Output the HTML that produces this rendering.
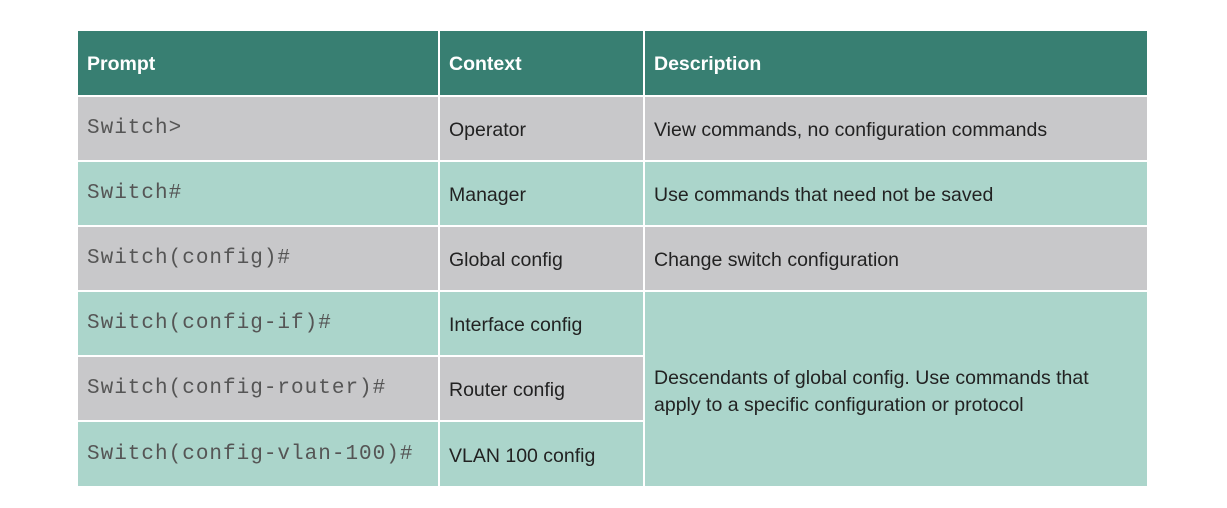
<!DOCTYPE html>
<html><head><style>
body{margin:0;width:1227px;height:508px;background:#fff;position:relative;overflow:hidden;font-family:"Liberation Sans",sans-serif;}
.c{position:absolute;display:flex;align-items:center;box-sizing:border-box;color:#222;font-size:19.5px;padding-top:4px;}
.h{background:#387f72;color:#fff;font-weight:bold;padding-top:2px;}
.g{background:#c8c8ca;}
.t{background:#abd5cb;}
.m{font-family:"Liberation Mono",monospace;font-size:21px;letter-spacing:1px;color:#555;padding-top:0;}
</style></head><body>
<div class="c h" style="left:78px;top:31px;width:360px;height:64px;padding-left:9px">Prompt</div>
<div class="c h" style="left:440px;top:31px;width:203px;height:64px;padding-left:9px">Context</div>
<div class="c h" style="left:645px;top:31px;width:502px;height:64px;padding-left:9px">Description</div>

<div class="c g m" style="left:78px;top:97px;width:360px;height:63px;padding-left:9px">Switch&gt;</div>
<div class="c g" style="left:440px;top:97px;width:203px;height:63px;padding-left:9px">Operator</div>
<div class="c g" style="left:645px;top:97px;width:502px;height:63px;padding-left:9px">View commands, no configuration commands</div>

<div class="c t m" style="left:78px;top:162px;width:360px;height:63px;padding-left:9px">Switch#</div>
<div class="c t" style="left:440px;top:162px;width:203px;height:63px;padding-left:9px">Manager</div>
<div class="c t" style="left:645px;top:162px;width:502px;height:63px;padding-left:9px">Use commands that need not be saved</div>

<div class="c g m" style="left:78px;top:227px;width:360px;height:63px;padding-left:9px">Switch(config)#</div>
<div class="c g" style="left:440px;top:227px;width:203px;height:63px;padding-left:9px">Global config</div>
<div class="c g" style="left:645px;top:227px;width:502px;height:63px;padding-left:9px">Change switch configuration</div>

<div class="c t m" style="left:78px;top:292px;width:360px;height:63px;padding-left:9px">Switch(config-if)#</div>
<div class="c t" style="left:440px;top:292px;width:203px;height:63px;padding-left:9px">Interface config</div>

<div class="c g m" style="left:78px;top:357px;width:360px;height:63px;padding-left:9px">Switch(config-router)#</div>
<div class="c g" style="left:440px;top:357px;width:203px;height:63px;padding-left:9px">Router config</div>

<div class="c t m" style="left:78px;top:422px;width:360px;height:64px;padding-left:9px">Switch(config-vlan-100)#</div>
<div class="c t" style="left:440px;top:422px;width:203px;height:64px;padding-left:9px">VLAN 100 config</div>

<div class="c t" style="left:645px;top:292px;width:502px;height:194px;padding-left:9px;padding-top:6px;line-height:27px">Descendants of global config. Use commands that<br>apply to a specific configuration or protocol</div>
</body></html>
